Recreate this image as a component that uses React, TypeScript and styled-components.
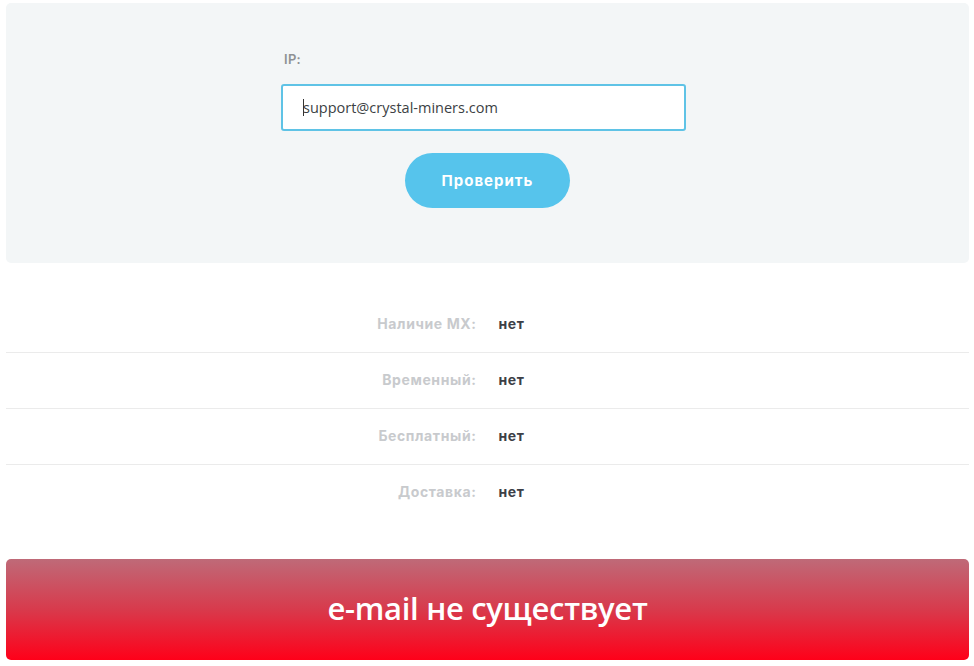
import * as React from 'react'
import styled, { createGlobalStyle } from 'styled-components'

const GlobalStyle = createGlobalStyle`
  html, body {
    margin: 0;
    padding: 0;
    background: #ffffff;
  }
  body {
    font-family: 'Open Sans', 'Liberation Sans', sans-serif;
  }
`

interface ICheckRow {
  label: string
  value: string
}

const rows: ICheckRow[] = [
  { label: 'Наличие MX:', value: 'нет' },
  { label: 'Временный:', value: 'нет' },
  { label: 'Бесплатный:', value: 'нет' },
  { label: 'Доставка:', value: 'нет' }
]

const Page = styled.div`
  display: flex;
  flex-direction: column;
  padding: 3px 5px 6px 6px;
  width: 974px;
  box-sizing: border-box;
`

const FormPanel = styled.section`
  display: flex;
  justify-content: center;
  height: 260px;
  box-sizing: border-box;
  padding-top: 47px;
  background: #f3f6f7;
  border-radius: 5px;
`

const FormBox = styled.form`
  display: flex;
  flex-direction: column;
  width: 413px;
`

const FieldLabel = styled.label`
  padding-left: 3px;
  font-family: 'Inter', 'Noto Sans', sans-serif;
  font-weight: 600;
  font-size: 13px;
  letter-spacing: 0.3px;
  line-height: 18px;
  color: #8f9194;
`

const InputWrap = styled.div`
  position: relative;
  width: 405px;
  margin-top: 16px;
`

const TextInput = styled.input`
  display: block;
  width: 100%;
  height: 47px;
  box-sizing: border-box;
  padding: 0 0 0 20px;
  border: 2px solid #5fc3e6;
  border-radius: 3px;
  background: #ffffff;
  font-family: 'Open Sans', 'Liberation Sans', sans-serif;
  font-size: 14.5px;
  color: #3c3f44;
  outline: none;
`

const Caret = styled.span`
  position: absolute;
  left: 22px;
  top: 15px;
  width: 1px;
  height: 17px;
  background: #333;
`

const CheckButton = styled.button`
  align-self: center;
  margin-top: 22px;
  width: 165px;
  height: 55px;
  border: none;
  border-radius: 28px;
  background: #56c4ec;
  color: #ffffff;
  font-family: 'Inter', 'Noto Sans', sans-serif;
  font-weight: 700;
  font-size: 15px;
  letter-spacing: 1px;
  cursor: pointer;
`

const ResultList = styled.div`
  display: flex;
  flex-direction: column;
  margin-top: 34px;
`

const ResultRow = styled.div`
  display: grid;
  grid-template-columns: 1fr 1fr;
  column-gap: 22px;
  align-items: center;
  height: 56px;
  padding-bottom: 3px;
  box-sizing: border-box;
  border-bottom: 1px solid #ebebeb;

  &:last-child {
    border-bottom: none;
  }
`

const RowLabel = styled.span`
  text-align: right;
  font-family: 'Inter', 'Noto Sans', sans-serif;
  font-weight: 700;
  font-size: 14px;
  letter-spacing: 0.6px;
  color: #c8cacd;
`

const RowValue = styled.span`
  font-family: 'Inter', 'Noto Sans', sans-serif;
  font-weight: 700;
  font-size: 14px;
  letter-spacing: 0.6px;
  color: #3d4047;
`

const StatusBanner = styled.div`
  display: flex;
  align-items: center;
  justify-content: center;
  margin-top: 38px;
  height: 101px;
  padding-bottom: 4px;
  box-sizing: border-box;
  border-radius: 5px;
  background: linear-gradient(to bottom, #bf6a78 0%, #d83a4c 50%, #ff0019 100%);
  color: #ffffff;
  font-family: 'Open Sans', 'Noto Sans', sans-serif;
  font-weight: 600;
  font-size: 31px;
  letter-spacing: -0.3px;
`

function CheckResult({ label, value }: ICheckRow) {
  return (
    <ResultRow>
      <RowLabel>{label}</RowLabel>
      <RowValue>{value}</RowValue>
    </ResultRow>
  )
}

export default function App() {
  return (
    <Page>
      <GlobalStyle />
      <FormPanel>
        <FormBox onSubmit={e => e.preventDefault()}>
          <FieldLabel htmlFor="ip">IP:</FieldLabel>
          <InputWrap>
            <TextInput id="ip" readOnly value="support@crystal-miners.com" />
            <Caret />
          </InputWrap>
          <CheckButton type="submit">Проверить</CheckButton>
        </FormBox>
      </FormPanel>
      <ResultList>
        {rows.map((row, i) => (
          <CheckResult key={i} label={row.label} value={row.value} />
        ))}
      </ResultList>
      <StatusBanner>e-mail не существует</StatusBanner>
    </Page>
  )
}
